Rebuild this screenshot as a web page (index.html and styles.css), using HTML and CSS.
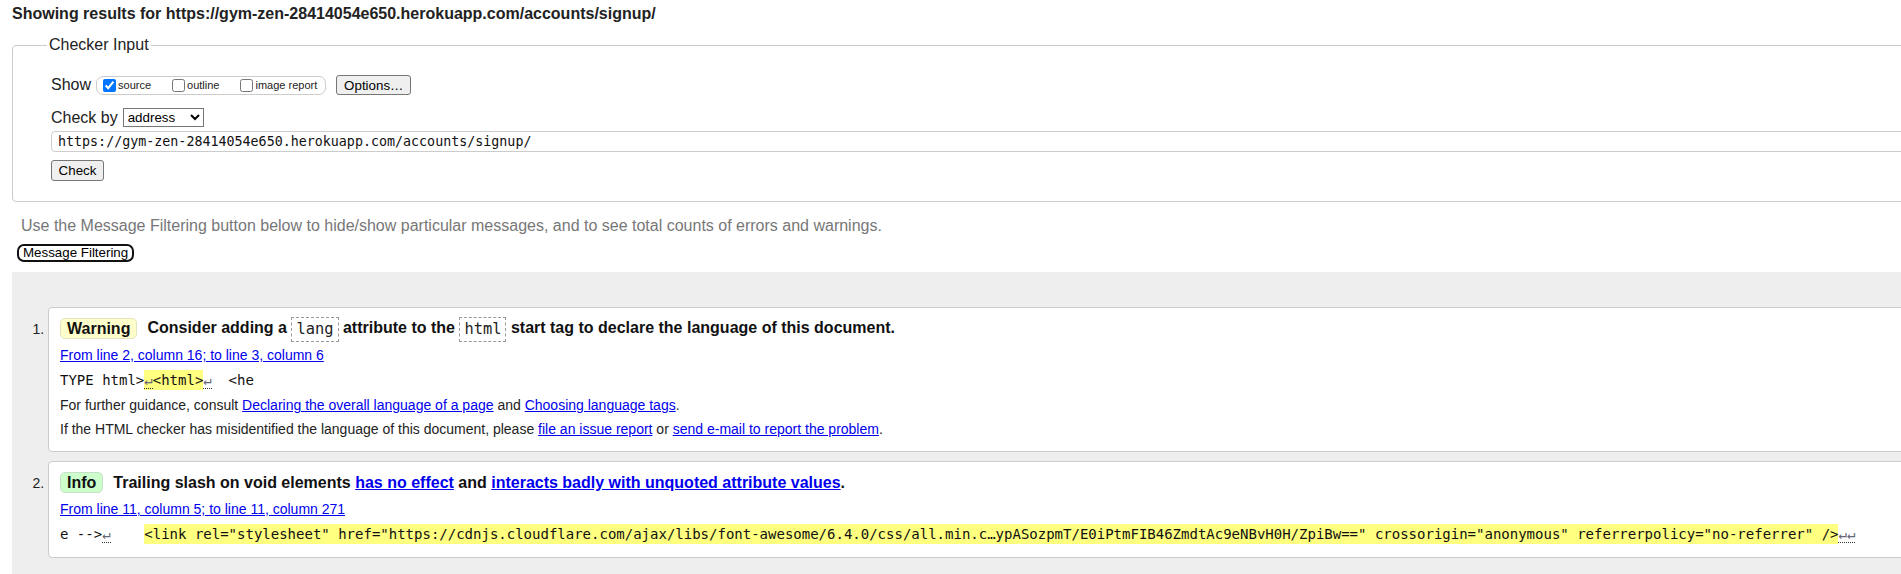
FILE: index.html
```html
<!DOCTYPE html>
<html lang="en">
<head>
<meta charset="utf-8">
<title>Showing results for https://gym-zen-28414054e650.herokuapp.com/accounts/signup/ - Nu Html Checker</title>
<link rel="stylesheet" href="styles.css">
</head>
<body>
<h2 class="results-heading">Showing results for https://gym-zen-28414054e650.herokuapp.com/accounts/signup/</h2>

<form class="checker-form">
  <fieldset class="checker-input">
    <legend>Checker Input</legend>
    <div class="row row-show">
      <span class="label">Show</span>
      <span class="show-group">
        <label class="opt opt-source"><input type="checkbox" checked><span>source</span></label>
        <label class="opt opt-outline"><input type="checkbox"><span>outline</span></label>
        <label class="opt opt-image"><input type="checkbox"><span>image report</span></label>
      </span>
      <button type="button" class="btn btn-options">Options…</button>
    </div>
    <div class="row row-checkby">
      <span class="label">Check by</span>
      <select class="sel"><option>address</option></select>
    </div>
    <div class="row row-url">
      <input class="url" type="text" value="https://gym-zen-28414054e650.herokuapp.com/accounts/signup/">
    </div>
    <div class="row row-check">
      <button type="button" class="btn btn-check">Check</button>
    </div>
  </fieldset>
</form>

<p class="intro">Use the Message Filtering button below to hide/show particular messages, and to see total counts of errors and warnings.</p>
<button type="button" class="btn-filter">Message Filtering</button>

<div class="results">
  <ol class="messages">
    <li class="msg warning">
      <p class="msg-title"><strong class="badge badge-warning">Warning</strong> <span class="title-text">Consider adding a <code class="cbox">lang</code> attribute to the <code class="cbox">html</code> start tag to declare the language of this document.</span></p>
      <p class="loc"><a href="#">From line 2, column 16; to line 3, column 6</a></p>
      <p class="extract"><code>TYPE html&gt;<mark><span class="lf">↵</span>&lt;html&gt;</mark><span class="lf">↵</span>  &lt;he</code></p>
      <p class="note">For further guidance, consult <a href="#">Declaring the overall language of a page</a> and <a href="#">Choosing language tags</a>.</p>
      <p class="note">If the HTML checker has misidentified the language of this document, please <a href="#">file an issue report</a> or <a href="#">send e-mail to report the problem</a>.</p>
    </li>
    <li class="msg info">
      <p class="msg-title"><strong class="badge badge-info">Info</strong> <span class="title-text">Trailing slash on void elements <a href="#">has no effect</a> and <a href="#">interacts badly with unquoted attribute values</a>.</span></p>
      <p class="loc"><a href="#">From line 11, column 5; to line 11, column 271</a></p>
      <p class="extract"><code>e --&gt;<span class="lf">↵</span>    <mark>&lt;link rel="stylesheet" href="https://cdnjs.cloudflare.com/ajax/libs/font-awesome/6.4.0/css/all.min.c…ypASozpmT/E0iPtmFIB46ZmdtAc9eNBvH0H/ZpiBw==" crossorigin="anonymous" referrerpolicy="no-referrer" /&gt;</mark><span class="lf">↵↵</span></code></p>
    </li>
  </ol>
</div>
</body>
</html>
```

FILE: styles.css
```css
html, body {
  margin: 0;
  padding: 0;
  overflow: hidden;
  background: #fff;
}
body {
  font-family: "Liberation Sans", Arial, sans-serif;
  color: #222;
  width: 1901px;
}

.results-heading {
  margin: 5px 0 0 12px;
  font-size: 16px;
  font-weight: bold;
  line-height: 18px;
  color: #222;
}

.checker-form {
  margin: 0;
}
.checker-input {
  margin: 13px 0 0 12px;
  padding: 0 0 20px 38px;
  width: 2000px;
  border: 1px solid #ccc;
  border-radius: 4px;
  min-inline-size: 0;
}
.checker-input legend {
  font-size: 16px;
  line-height: 18px;
  padding: 0 2px;
  margin-left: -4px;
  color: #222;
}

.row {
  display: flex;
  align-items: center;
}
.row-show {
  margin-top: 21px;
  height: 20px;
}
.row-checkby {
  margin-top: 13px;
  height: 19px;
}
.row-url {
  margin-top: 4px;
  height: 21px;
}
.row-check {
  margin-top: 8px;
  height: 21px;
}
.label {
  font-size: 16px;
  color: #222;
}

.show-group {
  display: flex;
  align-items: center;
  margin-left: 5px;
  height: 17px;
  padding: 0 8px 0 6px;
  border: 1px solid #ccc;
  border-radius: 7px;
}
.opt {
  display: flex;
  align-items: center;
  font-size: 11px;
  color: #222;
}
.opt input {
  margin: 0 2px 0 0;
  width: 13px;
  height: 13px;
}
.opt-outline, .opt-image {
  margin-left: 21px;
}

.btn {
  font-family: "Liberation Sans", Arial, sans-serif;
  font-size: 13.33px;
  color: #000;
  background: #efefef;
  border: 1px solid #767676;
  border-radius: 3px;
  padding: 0 6px;
}
.btn-options {
  margin-left: 10px;
  height: 20px;
  width: 75px;
}
.btn-check {
  height: 21px;
  width: 53px;
}

.sel {
  margin-left: 5px;
  width: 81px;
  height: 19px;
  font-family: "Liberation Sans", Arial, sans-serif;
  font-size: 13.33px;
  color: #000;
  background: #fff;
  border: 1px solid #767676;
  border-radius: 0;
}

.url {
  box-sizing: border-box;
  width: 1900px;
  height: 21px;
  padding: 0 6px;
  border: 1px solid #ccc;
  border-radius: 4px;
  font-family: "DejaVu Sans Mono", monospace;
  font-size: 13.33px;
  color: #111;
  background: #fff;
}

.intro {
  margin: 15px 0 0 21px;
  font-size: 16px;
  line-height: 18px;
  color: #777;
}
.btn-filter {
  display: block;
  margin: 9px 0 0 17px;
  height: 18px;
  padding: 0 4px;
  font-family: "Liberation Sans", Arial, sans-serif;
  font-size: 13.33px;
  line-height: 14px;
  color: #000;
  background: #fff;
  border: 2px solid #111;
  border-radius: 7px;
}

.results {
  margin: 10px 0 0 12px;
  background: #eee;
  height: 400px;
}
.messages {
  margin: 0;
  padding: 35px 0 0 36px;
  list-style: decimal outside;
}
.msg {
  width: 1900px;
  background: #fff;
  border: 1px solid #ccc;
  border-radius: 4px;
  margin: 0 0 9px 0;
  padding: 8px 12px 10px 11px;
  font-size: 14px;
  color: #222;
}
.msg p {
  margin: 0;
}
.msg-title {
  height: 25px;
  line-height: 25px;
  display: flex;
  align-items: center;
  margin-bottom: 2px !important;
}
.badge {
  display: inline-block;
  box-sizing: border-box;
  height: 21px;
  line-height: 19px;
  padding: 0 6px;
  font-size: 16px;
  font-weight: bold;
  color: #111;
  border: 1px solid #ddd;
  border-radius: 5px;
  margin-right: 10px;
}
.badge-warning {
  background: #ffffcc;
  border-color: #e3e3c0;
}
.badge-info {
  background: #ccffcc;
  border-color: #c6e0c6;
}
.title-text {
  font-size: 16px;
  font-weight: bold;
  color: #111;
  white-space: nowrap;
}
.title-text a {
  color: #0000ee;
}
.cbox {
  display: inline-block;
  font-family: "DejaVu Sans Mono", monospace;
  font-size: 15.4px;
  font-weight: normal;
  line-height: 23px;
  padding: 0 4px;
  border: 1px dashed #999;
  color: #222;
  vertical-align: middle;
}
.loc, .note {
  line-height: 24px;
  height: 24px;
}
.extract {
  line-height: 26px;
  height: 26px;
}
.msg a {
  color: #0000ee;
}
.extract code {
  font-family: "DejaVu Sans Mono", monospace;
  font-size: 14px;
  white-space: pre;
  color: #111;
}
.extract mark {
  background: #ffff80;
  color: #111;
  padding: 2px 0;
}
.lf {
  color: #667;
  border-bottom: 1px dotted #333;
}
```
